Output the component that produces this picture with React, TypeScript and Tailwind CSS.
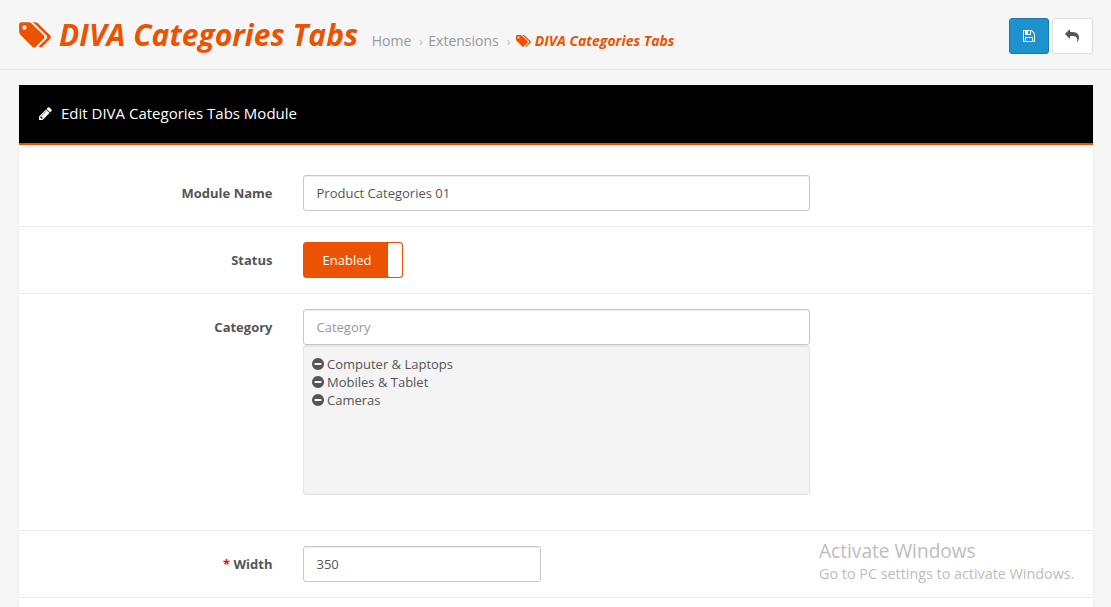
import type { ReactNode } from "react";

const TAGS =
  "M448 448q0-53-37.5-90.5t-90.5-37.5-90.5 37.5-37.5 90.5 37.5 90.5 90.5 37.5 90.5-37.5 37.5-90.5zm1067 576q0 53-37 90l-491 492q-39 37-91 37-53 0-90-37l-715-716q-38-37-64.5-101t-26.5-117v-416q0-52 38-90t90-38h416q53 0 117 26.5t102 64.5l715 714q37 39 37 91zm384 0q0 53-37 90l-491 492q-39 37-91 37-36 0-59-14t-53-45l470-470q37-37 37-90 0-52-37-91l-715-714q-38-38-102-64.5t-117-26.5h224q53 0 117 26.5t102 64.5l715 714q37 39 37 91z";
const PENCIL =
  "M491 1536l91-91-235-235-91 91v107h128v128h107zm523-928q0-22-22-22-10 0-17 7l-542 542q-7 7-7 17 0 22 22 22 10 0 17-7l542-542q7-7 7-17zm-54-192l416 416-832 832h-416v-416zm683 96q0 53-37 90l-166 166-416-416 166-165q36-38 90-38 53 0 91 38l235 234q37 39 37 91z";
const FLOPPY =
  "M512 1536h768v-384h-768v384zm896 0h128v-896q0-14-10-38.5t-20-34.5l-281-281q-10-10-34-20t-39-10v416q0 40-28 68t-68 28h-576q-40 0-68-28t-28-68v-416h-128v1280h128v-416q0-40 28-68t68-28h832q40 0 68 28t28 68v416zm-384-928v-320q0-13-9.5-22.5t-22.5-9.5h-192q-13 0-22.5 9.5t-9.5 22.5v320q0 13 9.5 22.5t22.5 9.5h192q13 0 22.5-9.5t9.5-22.5zm640 32v928q0 40-28 68t-68 28h-1344q-40 0-68-28t-28-68v-1344q0-40 28-68t68-28h928q40 0 88 20t76 48l280 280q28 28 48 76t20 88z";
const REPLY =
  "M1792 1120q0 166-127 451-3 7-10.5 24t-13.5 30-13 22q-12 17-28 17-15 0-23.5-10t-8.5-25q0-9 2.5-26.5t2.5-23.5q5-68 5-123 0-101-17.5-181t-48.5-138.5-80-101-105.5-69.5-133-42.5-154-21.5-175.5-6h-224v256q0 26-19 45t-45 19-45-19l-512-512q-19-19-19-45t19-45l512-512q19-19 45-19t45 19 19 45v256h224q713 0 875 403 53 134 53 333z";
const MINUS =
  "M1344 960v-128q0-26-19-45t-45-19h-768q-26 0-45 19t-19 45v128q0 26 19 45t45 19h768q26 0 45-19t19-45zm320-64q0 209-103 385.5t-279.5 279.5-385.5 103-385.5-103-279.5-279.5-103-385.5 103-385.5 279.5-279.5 385.5-103 385.5 103 279.5 279.5 103 385.5z";

function Icon({ d, className, box = "0 0 1792 1792" }: { d: string; className: string; box?: string }) {
  return (
    <svg viewBox={box} className={`shrink-0 fill-current ${className}`} aria-hidden="true">
      <path d={d} />
    </svg>
  );
}

const field =
  "block h-9 rounded-[3px] border border-[#c7c7c7] bg-white px-[12.5px] text-[13px] text-[#555] shadow-[inset_0_1px_1px_rgba(0,0,0,0.075)] outline-none placeholder:text-[#999]";

function Row({ label, required, children, className = "" }: { label: string; required?: boolean; children: ReactNode; className?: string }) {
  return (
    <div className={`flex py-[15px] ${className}`}>
      <label className="h-9 w-[253.5px] shrink-0 text-right font-bold leading-9 text-[#555]">
        {required && <span className="text-[#f00]">* </span>}
        {label}
      </label>
      <div className="ml-[30.5px]">{children}</div>
    </div>
  );
}

export default function App() {
  return (
    <div className="relative h-[607px] w-full overflow-hidden bg-[#f6f6f6] font-['Open_Sans',sans-serif] text-[13px] leading-[18px] text-[#555]">
      <header className="flex h-[70px] items-start border-b border-[#e7e7e7] pl-[19px] pr-[18px]">
        <h1 className="flex pt-[15px] text-[30px] font-bold italic leading-[40px] text-[#eb5202] [text-shadow:0_1px_#fff]">
          <Icon d={TAGS} box="0 0 1899 1792" className="mt-[5px] h-[30px] w-[32px]" />
          <span className="ml-2 whitespace-nowrap">DIVA Categories Tabs</span>
        </h1>
        <nav className="ml-[13.5px] flex whitespace-nowrap pt-[31px] text-[14px] leading-5 text-[#999]">
          <span>Home</span>
          <span className="ml-2 mr-[5px] w-[4px] pt-px text-[12px] text-[#bbb]">›</span>
          <span>Extensions</span>
          <span className="ml-2 mr-[5px] w-[4px] pt-px text-[12px] text-[#bbb]">›</span>
          <span className="flex font-bold italic text-[#eb5202]">
            <Icon d={TAGS} box="0 0 1899 1792" className="mr-1 mt-[3px] h-[14px] w-[15px]" />
            DIVA Categories Tabs
          </span>
        </nav>
        <div className="ml-auto flex gap-[3px] pt-[18px]">
          <button className="flex h-9 w-10 items-center justify-center rounded-[3px] border border-[#1978ab] bg-[#1e91cf] text-white">
            <Icon d={FLOPPY} className="size-[14px]" />
          </button>
          <button className="flex h-9 w-[41px] items-center justify-center rounded-[3px] border border-[#ddd] bg-white pr-px text-[#555]">
            <Icon d={REPLY} className="size-[14px]" />
          </button>
        </div>
      </header>

      <main className="ml-[18px] mr-[17px] mt-[15px] border-x border-[#f0f0f0] bg-white">
        <div className="flex h-[60px] items-start border-b-2 border-[#eb5202] bg-black pl-[19px] pt-[18px] text-[15px] leading-5 text-white">
          <Icon d={PENCIL} className="mr-[8px] mt-[3px] size-[15px]" />
          <h3>Edit DIVA Categories Tabs Module</h3>
        </div>
        <form className="pt-[15px]">
          <Row label="Module Name">
            <input className={`${field} w-[507px]`} defaultValue="Product Categories 01" />
          </Row>
          <Row label="Status" className="border-t border-[#ededed]">
            <div className="flex h-9 w-[100px] overflow-hidden rounded-[3px] border border-[#eb5202] bg-[#eb5202]">
              <span className="w-[84px] pl-[2px] text-center leading-[34px] text-white">Enabled</span>
              <span className="w-[14px] rounded-[2px] bg-white" />
            </div>
          </Row>
          <Row label="Category" className="border-t border-[#ededed]">
            <input className={`${field} w-[507px]`} placeholder="Category" />
            <div className="mb-5 h-[150px] w-[507px] rounded-[3px] border border-[#e3e3e3] bg-[#f4f4f4] px-[8px] pt-[9px] shadow-[inset_0_1px_1px_rgba(0,0,0,0.05)]">
              {["Computer & Laptops", "Mobiles & Tablet", "Cameras"].map((name) => (
                <div key={name} className="flex h-[18px]">
                  <Icon d={MINUS} box="128 0 1536 1792" className="mr-[3px] mt-[2px] h-[14px] w-[12px]" />
                  {name}
                </div>
              ))}
            </div>
          </Row>
          <Row label="Width" required className="border-t border-[#ededed]">
            <input className={`${field} w-[238px]`} defaultValue="350" />
          </Row>
          <div className="h-10 border-t border-[#ededed]" />
        </form>
      </main>

      <div className="absolute left-[819px] top-[538px] whitespace-nowrap text-[#bdbdbd]">
        <div className="text-[19.1px] leading-[26px]">Activate Windows</div>
        <div className="text-[14.35px] leading-5">Go to PC settings to activate Windows.</div>
      </div>
    </div>
  );
}
